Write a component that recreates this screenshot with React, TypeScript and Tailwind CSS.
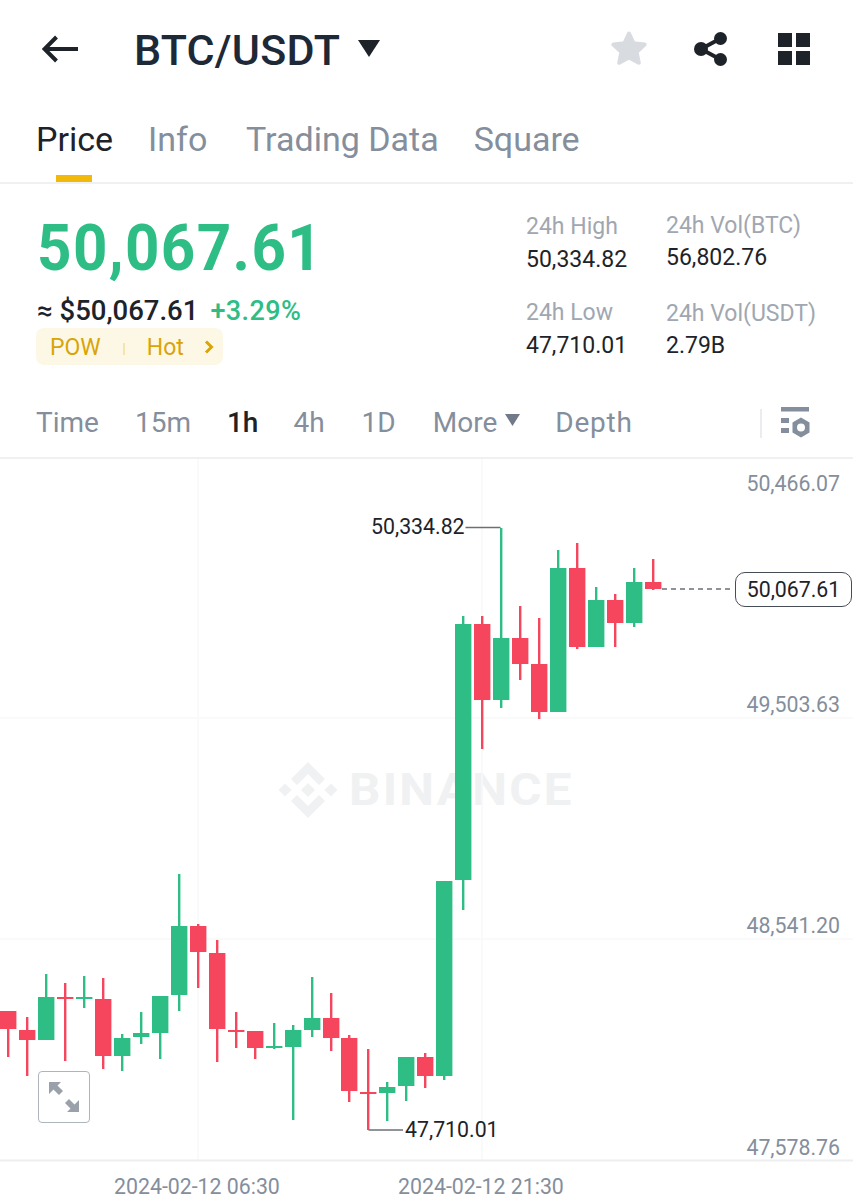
import React from 'react'

type Candle = { x: number; up: boolean; top: number; bottom: number; hi: number; lo: number }

// x, up, body top, body bottom, wick high, wick low (all in chart pixels of the page)
const rows: [number, number, number, number, number, number][] = [
  [8, 0, 1011, 1029, 1011, 1057],
  [27, 0, 1030, 1040, 1017, 1076],
  [46, 1, 997, 1040, 974, 1040],
  [65, 0, 997, 999, 983, 1061],
  [84, 1, 997, 999, 976, 1008],
  [103, 0, 999, 1056, 978, 1069],
  [122, 1, 1038, 1056, 1034, 1071],
  [141, 1, 1033, 1037, 1012, 1044],
  [160, 1, 996, 1033, 996, 1059],
  [179, 1, 926, 995, 874, 1011],
  [198, 0, 926, 952, 924, 988],
  [217, 0, 953, 1029, 940, 1062],
  [236, 0, 1030, 1032, 1012, 1048],
  [255, 0, 1031, 1048, 1031, 1059],
  [274, 1, 1046, 1048, 1023, 1049],
  [293, 1, 1030, 1047, 1025, 1120],
  [312, 1, 1018, 1030, 977, 1037],
  [331, 0, 1018, 1038, 993, 1051],
  [349, 0, 1038, 1091, 1035, 1102],
  [368, 0, 1092, 1094, 1049, 1130],
  [387, 1, 1087, 1093, 1082, 1121],
  [406, 1, 1057, 1086, 1057, 1101],
  [425, 0, 1057, 1076, 1053, 1088],
  [444, 1, 881, 1076, 881, 1080],
  [463, 1, 624, 880, 616, 910],
  [482, 0, 624, 700, 616, 749],
  [501, 1, 638, 700, 528, 708],
  [520, 0, 638, 664, 606, 680],
  [539, 0, 664, 712, 618, 719],
  [558, 1, 568, 712, 550, 712],
  [577, 0, 568, 647, 543, 649],
  [596, 1, 600, 647, 587, 647],
  [615, 0, 600, 623, 594, 647],
  [634, 1, 582, 623, 568, 627],
  [653, 0, 582, 589, 559, 590],
]

const candles: Candle[] = rows.map(([x, up, top, bottom, hi, lo]) => ({ x, up: up === 1, top, bottom, hi, lo }))

const GREEN = '#2ebd85'
const RED = '#f6465d'

function ChartSvg() {
  // the chart starts at page y=459, so everything is drawn in page coords with a shifted viewBox
  return (
    <svg className="relative block h-full w-full" viewBox="0 459 853 741">
      <line x1="0" y1="718" x2="853" y2="718" stroke="#f9f9fa" strokeWidth="1.5" />
      <line x1="0" y1="939" x2="853" y2="939" stroke="#f9f9fa" strokeWidth="1.5" />
      <line x1="198" y1="459" x2="198" y2="1160" stroke="#f9f9fa" strokeWidth="1.5" />
      <line x1="482" y1="459" x2="482" y2="1160" stroke="#f9f9fa" strokeWidth="1.5" />
      <line x1="0" y1="1160.5" x2="853" y2="1160.5" stroke="#eceef0" strokeWidth="2" />

      {/* watermark logo */}
      <g fill="#f0f1f2">
        <path d="M308 783l7 7-7 7-7-7z" />
        <path d="M308 762l17 17-6 6-11-11-11 11-6-6z" />
        <path d="M308 818l17-17-6-6-11 11-11-11-6 6z" />
        <path d="M285 783.500l6.500 6.500-6.500 6.500-6.500-6.500z" />
        <path d="M331 783.500l6.500 6.500-6.500 6.500-6.500-6.500z" />
      </g>

      {candles.map((c) => {
        const color = c.up ? GREEN : RED
        return (
          <g key={c.x} fill={color}>
            <rect x={c.x - 1} y={c.hi} width="2.4" height={c.lo - c.hi} />
            <rect x={c.x - 8} y={c.top} width="16.4" height={c.bottom - c.top} />
          </g>
        )
      })}

      <path d="M465.500 527.500H500.500" stroke="#6b7076" strokeWidth="1.4" fill="none" />
      <path d="M368.500 1130H403" stroke="#6b7076" strokeWidth="1.4" fill="none" />
      <line x1="662" y1="589" x2="733" y2="589" stroke="#6b7076" strokeWidth="1.4" strokeDasharray="5 4" />
    </svg>
  )
}

function AxisLabel({ className, children }: { className: string; children: React.ReactNode }) {
  return <span className={`absolute leading-none whitespace-nowrap ${className}`}>{children}</span>
}

export default function App() {
  return (
    <div className="flex h-[1200px] w-[853px] flex-col overflow-hidden bg-white font-['Roboto',sans-serif] text-[#1e2329]">
      {/* top bar */}
      <div className="flex h-[100px] shrink-0 items-center pl-[42px] pr-[43px]">
        <svg width="36" height="28" viewBox="0 0 36 28" fill="none" stroke="#1e2329" strokeWidth="4" className="-mt-[2px]">
          <path d="M36 14H3M14.500 2L2.500 14l12 12" />
        </svg>
        <span className="ml-[56px] text-[43px] font-medium leading-none tracking-[0.2px] text-[#1e2938]">BTC/USDT</span>
        <svg width="22" height="17" viewBox="0 0 22 17" className="-mt-[3px] ml-[18px]" fill="#1e2329">
          <path d="M0 0h22L11 17z" />
        </svg>
        <svg width="36" height="36" viewBox="0 0 36 36" className="-mt-[3px] ml-auto" fill="#d8dbe0">
          <path d="M18 2.500l4.600 9.800 11 1.300-8 7.400 2.200 10.800L18 26.500l-9.800 5.300L10.400 21l-8-7.400 11-1.300z" stroke="#d8dbe0" strokeWidth="4" strokeLinejoin="round" />
        </svg>
        <svg width="34" height="34" viewBox="0 0 34 34" className="-mt-[2px] ml-[47px]" fill="#1e2329">
          <circle cx="26.500" cy="6.500" r="6.500" />
          <circle cx="26.500" cy="27.500" r="6.500" />
          <circle cx="7" cy="17" r="7" />
          <path d="M7 17L26.500 6.500M7 17l19.500 10.500" stroke="#1e2329" strokeWidth="4" />
        </svg>
        <div className="-mt-[2px] ml-[50px] grid grid-cols-2 gap-[4px]">
          <div className="h-[14px] w-[14px] bg-[#1e2329]" />
          <div className="h-[14px] w-[14px] bg-[#1e2329]" />
          <div className="h-[14px] w-[14px] bg-[#1e2329]" />
          <div className="h-[14px] w-[14px] bg-[#1e2329]" />
        </div>
      </div>

      {/* tabs */}
      <div className="relative flex h-[84px] shrink-0 items-start gap-[35px] border-b-2 border-[#eef0f2] pl-[36px] pt-[19px] text-[34px] leading-[40px] text-[#848e9c]">
        <span className="text-[#1e2329]">Price</span>
        <span className="w-[63px]">Info</span>
        <span>Trading Data</span>
        <span>Square</span>
        <div className="absolute bottom-0 left-[56px] h-[7px] w-[36px] bg-[#f0b90b]" />
      </div>

      {/* price + stats */}
      <div className="flex h-[204px] shrink-0">
        <div className="w-[526px] pl-[37px] pt-[26px]">
          <div className="origin-left scale-x-[0.925] whitespace-nowrap text-[65px] font-bold leading-[76px] tracking-[1.5px] text-[#2ebd85]">50,067.61</div>
          <div className="mt-[9px] flex items-baseline leading-[32px]">
            <span className="text-[27.500px] font-medium">≈ $50,067.61</span>
            <span className="ml-[12px] text-[27px] font-medium tracking-[0.4px] text-[#2ebd85]">+3.29%</span>
          </div>
          <div className="-ml-[1px] mt-[1px] flex h-[37px] w-[187px] items-center rounded-[8px] bg-[#fdf8e6] pl-[14px] pt-[4px] text-[23px] text-[#d9a506]">
            <span>POW</span>
            <span className="ml-[22px] h-[12px] w-[2px] bg-[#f3e4b0]" />
            <span className="ml-[22px]">Hot</span>
            <svg width="10" height="14" viewBox="0 0 10 14" fill="none" stroke="#d9a506" strokeWidth="3" className="-mt-[3px] ml-[20px]">
              <path d="M2 1.500L7.500 7 2 12.500" />
            </svg>
          </div>
        </div>
        <div className="grid w-[140px] grid-rows-2 pt-[28px]">
          <div>
            <div className="text-[23px] leading-[30px] text-[#a0a7b1]">24h High</div>
            <div className="mt-[3px] text-[23px] leading-[30px]">50,334.82</div>
          </div>
          <div className="-mt-[2px]">
            <div className="text-[23px] leading-[30px] text-[#a0a7b1]">24h Low</div>
            <div className="mt-[3px] text-[23px] leading-[30px]">47,710.01</div>
          </div>
        </div>
        <div className="grid flex-1 grid-rows-2 pt-[27px]">
          <div>
            <div className="text-[23px] leading-[30px] text-[#a0a7b1]">24h Vol(BTC)</div>
            <div className="mt-[2px] text-[23px] leading-[30px]">56,802.76</div>
          </div>
          <div className="-mt-[1px]">
            <div className="text-[23px] leading-[30px] text-[#a0a7b1]">24h Vol(USDT)</div>
            <div className="mt-[2px] text-[23px] leading-[30px]">2.79B</div>
          </div>
        </div>
      </div>

      {/* intervals */}
      <div className="flex h-[71px] shrink-0 items-center border-b-2 border-[#eef0f2] pt-[1px] pl-[36px] text-[28px] text-[#848e9c]">
        <span>Time</span>
        <span className="ml-[36px]">15m</span>
        <span className="ml-[36px] font-medium text-[#1e2329]">1h</span>
        <span className="ml-[35px]">4h</span>
        <span className="ml-[37px]">1D</span>
        <span className="ml-[37px]">More</span>
        <svg width="15" height="12" viewBox="0 0 15 12" className="-mt-[6px] ml-[8px]" fill="#707a8a">
          <path d="M0 0h15L7.500 12z" />
        </svg>
        <span className="ml-[35px] tracking-[0.8px]">Depth</span>
        <span className="ml-auto h-[29px] w-[2px] bg-[#eaecef]" />
        <svg width="30" height="32" viewBox="0 0 30 32" className="-mt-[2px] ml-[19px] mr-[42px]" fill="#848e9c">
          <rect x="0" y="1" width="28" height="4.500" />
          <rect x="0" y="12" width="8" height="5" />
          <rect x="0" y="22" width="8" height="5" />
          <path fillRule="evenodd" d="M20 11.500l8.500 5v10l-8.500 5-8.500-5v-10zM20 17.500a4 4 0 1 0 0 8 4 4 0 0 0 0-8z" />
        </svg>
      </div>

      {/* chart */}
      <div className="relative flex-1 text-[21.300px]">
        <span className="absolute left-[349px] top-[309px] origin-left scale-x-[1.12] text-[44px] font-bold leading-none tracking-[2px] text-[#f0f1f2]">BINANCE</span>

        <ChartSvg />

        <AxisLabel className="right-[13px] top-[14px] text-[#848e9c]">50,466.07</AxisLabel>
        <AxisLabel className="right-[13px] top-[235px] text-[#848e9c]">49,503.63</AxisLabel>
        <AxisLabel className="right-[13px] top-[456px] text-[#848e9c]">48,541.20</AxisLabel>
        <AxisLabel className="right-[13px] top-[678px] text-[#848e9c]">47,578.76</AxisLabel>

        <AxisLabel className="left-[371px] top-[57px] text-[#1e2329]">50,334.82</AxisLabel>
        <AxisLabel className="left-[405px] top-[660px] text-[#1e2329]">47,710.01</AxisLabel>

        <AxisLabel className="left-[114px] top-[717px] text-[#848e9c]">2024-02-12 06:30</AxisLabel>
        <AxisLabel className="left-[398px] top-[717px] text-[#848e9c]">2024-02-12 21:30</AxisLabel>

        <div className="absolute left-[735px] top-[113px] flex h-[35px] w-[117px] items-center justify-center rounded-[10px] border-[1.5px] border-[#474d57] bg-white leading-none text-[#1e2329]">
          50,067.61
        </div>

        <div className="absolute left-[38px] top-[612px] flex h-[52px] w-[52px] items-center justify-center rounded-[4px] border-[1.5px] border-[#aeb4bc] bg-white">
          <svg width="30" height="30" viewBox="0 0 30 30" fill="#9aa1ab">
            <path d="M0 0h12l-3.500 3.500L14 9l-4 4-5.500-5.500L0 12zM30 30H18l3.500-3.500L16 21l4-4 5.500 5.500L30 18z" />
          </svg>
        </div>
      </div>
    </div>
  )
}
